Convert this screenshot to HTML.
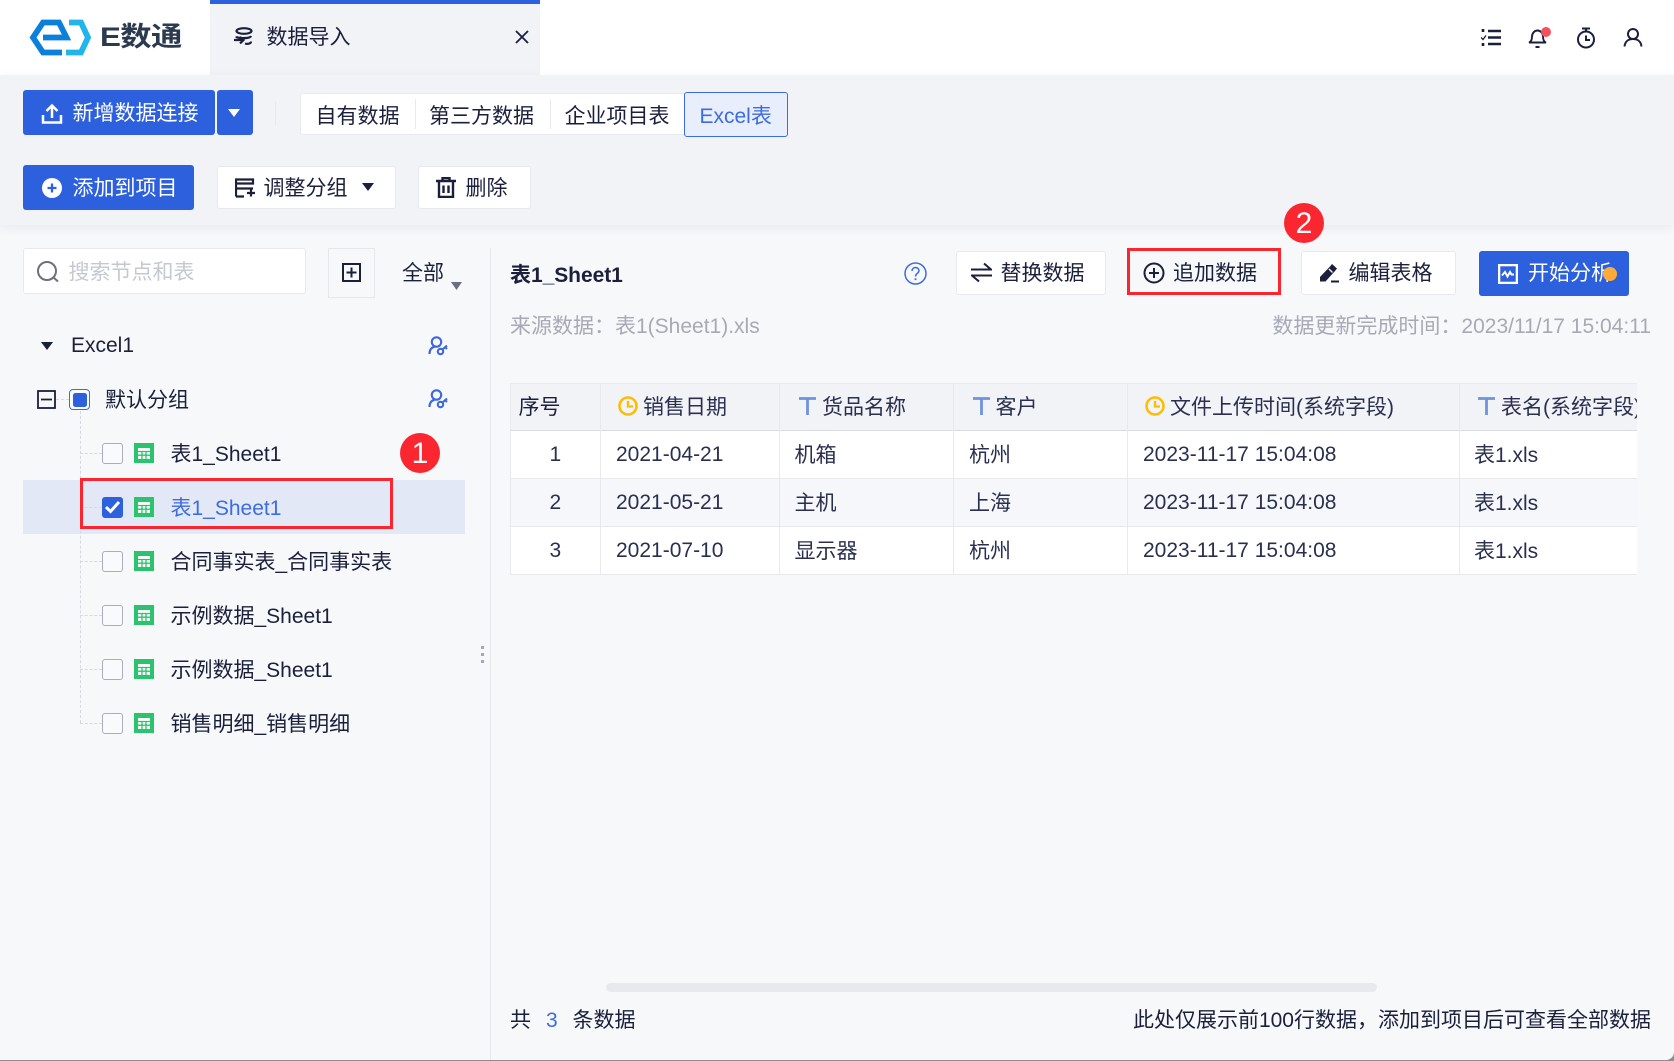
<!DOCTYPE html>
<html lang="zh-CN">
<head>
<meta charset="utf-8">
<title>数据导入</title>
<style>
html,body{margin:0;padding:0;width:1674px;height:1061px;overflow:hidden;background:#8a8f92}
#p{position:absolute;left:0;top:0;width:1674px;height:1060px;background:#f7f8fa;overflow:hidden;border-bottom-right-radius:8px;font-family:"Liberation Sans","Noto Sans CJK SC",sans-serif;font-size:21px;color:#1b1f3b}
#p div,#p svg{position:absolute}
.t{height:30px;line-height:30px;white-space:nowrap;margin-top:2px}
.w{background:#fff;border:1px solid #e8e9ee;border-radius:3px;box-sizing:border-box}
.b{background:#2d60dc;border-radius:3px}
.cb{width:21px;height:21px;box-sizing:border-box;border:1.5px solid #a9adbc;border-radius:3px;left:102px;background:#f9fafc}
.g{color:#a7aab6}
.c{color:#2a2f50}
.ln{background:#e7e9ee}
.dh{border-top:1px dashed #d6d8df;height:0}
</style>
</head>
<body>
<div id="p">
<svg width="0" height="0" style="left:0;top:0">
<symbol id="tb" viewBox="0 0 20 20"><rect width="20" height="20" fill="#2bc46e"/><rect x="4" y="5" width="12" height="11" fill="#fff"/><path d="M4 8.500h12M4 12.200h12M8 8.500v7.500M12 8.500v7.500" stroke="#2bc46e" stroke-width="1.300" fill="none"/></symbol>
<symbol id="pk" viewBox="0 0 20 20"><g fill="none" stroke="#3f67dc" stroke-width="2.100"><circle cx="8.500" cy="6" r="4.700"/><path d="M1.500 18c0-4 2-6.500 5-7.200"/><circle cx="12.500" cy="15.500" r="2.700"/><path d="M14.500 13.500l4.500-4M17 11l2 2"/></g></symbol>
<symbol id="ck" viewBox="0 0 20 20"><circle cx="10" cy="10" r="8.500" fill="none" stroke="#fdbd00" stroke-width="2.600"/><path d="M10 5v5.500h5" fill="none" stroke="#fdbd00" stroke-width="2.300"/></symbol>
<symbol id="tt" viewBox="0 0 18 18"><path d="M0 1.500h17M8.500 1.500V18" fill="none" stroke="#6f93dc" stroke-width="2.800"/></symbol>
</svg>

<!-- header -->
<div style="left:0;top:0;width:1674px;height:75px;background:#fff"></div>
<svg style="left:28px;top:18px" width="64" height="40" viewBox="28 18 64 40" fill="none" stroke-width="5.800">
<path d="M62 52.500H43L33 37.500 43 22.500H59L66.500 37.500H43" stroke="#0a80da"/>
<path d="M69 22.500H81L88 37.500 81 52.500H66" stroke="#22b5ea"/>
</svg>
<div class="t" style="left:100px;top:20px;font-size:27px;font-weight:700;color:#2b3a4e;letter-spacing:-.5px;transform:scaleX(1.16);transform-origin:0 50%">E数通</div>

<div style="left:210px;top:0;width:330px;height:75px;background:#f2f3f7"></div>
<div style="left:210px;top:0;width:330px;height:4px;background:#2d60dc"></div>
<svg style="left:232px;top:27px" width="22" height="20" viewBox="0 0 22 20" fill="none" stroke="#1b1f3b" stroke-width="2.200"><ellipse cx="12" cy="4" rx="7.500" ry="2.800"/><path d="M4 9.500c1 2 14 2.500 15-.5M13 16.500c3 1 6 0 6-2M2 13h9M8 10l3.500 3L8 16.500"/></svg>
<div class="t" style="left:266.500px;top:21px">数据导入</div>
<svg style="left:515px;top:30px" width="14" height="14" viewBox="0 0 14 14" stroke="#1b1f3b" stroke-width="1.800"><path d="M1 1l12 12M13 1L1 13"/></svg>

<svg style="left:1481px;top:28px" width="20" height="19" viewBox="0 0 20 19" fill="none" stroke="#1b1f3b"><path d="M7 3h13M7 9.500h13M7 16h13" stroke-width="2.600"/><path d="M2 1v3M2 15v3" stroke-width="2.600"/><path d="M0 9.500l2 2 3-4" stroke-width="1.300"/></svg>
<svg style="left:1528px;top:27px" width="20" height="21" viewBox="0 0 20 21" fill="none" stroke="#1b1f3b" stroke-width="1.900"><path d="M1 15.500c2.500-1 2.800-3 3-6 .2-3.500 2.500-6 5.500-6s5.300 2.500 5.500 6c.2 3 .5 5 3 6zM7.500 20h4"/></svg>
<svg style="left:1541px;top:27px" width="10" height="10"><circle cx="5" cy="5" r="5" fill="#f3525c"/></svg>
<svg style="left:1576px;top:27px" width="20" height="22" viewBox="0 0 20 22" fill="none" stroke="#1b1f3b" stroke-width="2"><circle cx="10" cy="12.500" r="8"/><path d="M6 1.500h8M10 1.500v3M10 8.500v4.500h4"/></svg>
<svg style="left:1623px;top:28px" width="20" height="19" viewBox="0 0 20 19" fill="none" stroke="#1b1f3b" stroke-width="2"><circle cx="10" cy="6" r="5"/><path d="M1.500 18.500c.5-5 4-7.500 8.500-7.500s8 2.500 8.500 7.500"/></svg>

<!-- toolbar -->
<div style="left:0;top:75px;width:1674px;height:150px;background:#f2f3f7;box-shadow:0 3px 10px rgba(40,50,80,.07)"></div>
<div class="b" style="left:23px;top:90px;width:192px;height:45px"></div>
<svg style="left:41px;top:103px" width="22" height="21" viewBox="0 0 22 21" fill="none" stroke="#fff" stroke-width="2.500"><path d="M11 15V2.500M5.500 8L11 2.500 16.500 8M2 12v7.500h18V12"/></svg>
<div class="t" style="left:72.500px;top:97px;color:#fff">新增数据连接</div>
<div class="b" style="left:217px;top:90px;width:36px;height:45px"></div>
<svg style="left:228px;top:109px" width="12" height="8"><path d="M0 0h12L6 8z" fill="#fff"/></svg>
<div class="ln" style="left:275px;top:101px;width:1px;height:24px"></div>

<div class="w" style="left:300px;top:93px;width:388px;height:42px"></div>
<div class="ln" style="left:415px;top:99px;width:1px;height:30px"></div>
<div class="ln" style="left:550px;top:99px;width:1px;height:30px"></div>
<div class="t" style="left:315.500px;top:100px">自有数据</div>
<div class="t" style="left:429px;top:100px">第三方数据</div>
<div class="t" style="left:564.500px;top:100px">企业项目表</div>
<div style="left:684px;top:92px;width:104px;height:45px;background:#e8eefb;border:1px solid #3d6ce0;border-radius:3px;box-sizing:border-box"></div>
<div class="t" style="left:699.500px;top:100px;color:#3d6ce0">Excel表</div>

<div class="b" style="left:23px;top:165px;width:171px;height:45px"></div>
<svg style="left:42px;top:178px" width="20" height="20" viewBox="0 0 20 20"><circle cx="10" cy="10" r="10" fill="#fff"/><path d="M5.500 10h9M10 5.500v9" stroke="#2d60dc" stroke-width="2.300"/></svg>
<div class="t" style="left:72.500px;top:172px;color:#fff">添加到项目</div>

<div class="w" style="left:217px;top:166px;width:179px;height:43px"></div>
<svg style="left:235px;top:178px" width="20" height="20" viewBox="0 0 20 20" fill="none" stroke="#1b1f3b" stroke-width="2.200"><path d="M1 1.500h17v4H1zM1 5.500V18.500M1 10.500h17M1 18.500h8M12 15h8M16 11.500v7"/></svg>
<div class="t" style="left:263.500px;top:172px">调整分组</div>
<svg style="left:362px;top:183px" width="12" height="8"><path d="M0 0h12L6 8z" fill="#1b1f3b"/></svg>

<div class="w" style="left:418px;top:166px;width:113px;height:43px"></div>
<svg style="left:436px;top:177px" width="20" height="21" viewBox="0 0 20 21" fill="none" stroke="#1b1f3b" stroke-width="2.400"><path d="M0 4h20M6.500 4V1h7v3M3 4v16h14V4M7.500 8.500v7.500M12.500 8.500v7.500"/></svg>
<div class="t" style="left:465.500px;top:172px">删除</div>

<!-- sidebar -->
<div style="left:490px;top:248px;width:1px;height:812px;background:#e8e9ee"></div>
<div class="w" style="left:23px;top:248px;width:283px;height:46px"></div>
<svg style="left:36px;top:260px" width="24" height="24" viewBox="0 0 24 24" fill="none" stroke="#6c6f80" stroke-width="2"><circle cx="11" cy="11" r="9"/><path d="M17.500 17.500l4.500 4"/></svg>
<div class="t" style="left:68.500px;top:256px;color:#c6c8d1">搜索节点和表</div>
<div style="left:328px;top:248px;width:47px;height:50px;border:1px solid #e5e7ec;box-sizing:border-box"></div>
<svg style="left:342px;top:263px" width="19" height="19" viewBox="0 0 19 19" fill="none" stroke="#1b1f3b" stroke-width="2"><rect x="1" y="1" width="17" height="17"/><path d="M4.500 9.500h10M9.500 4.500v10"/></svg>
<div class="t" style="left:402px;top:257px">全部</div>
<svg style="left:451px;top:282px" width="11" height="8"><path d="M0 0h11L5.500 8z" fill="#6b6f85"/></svg>

<svg style="left:41px;top:342px" width="12" height="8"><path d="M0 0h12L6 8z" fill="#1b1f3b"/></svg>
<div class="t" style="left:71px;top:329px">Excel1</div>
<svg style="left:428px;top:336px" width="20" height="20"><use href="#pk"/></svg>

<div class="dh" style="left:56px;top:399px;width:13px"></div>
<svg style="left:37px;top:390px" width="19" height="19" viewBox="0 0 19 19" fill="none" stroke="#1b1f3b" stroke-width="1.800"><rect x="1" y="1" width="17" height="17"/><path d="M4 9.500h11"/></svg>
<div style="left:69px;top:389px;width:21px;height:21px;box-sizing:border-box;border:1.500px solid #3d6ce0;border-radius:4px;background:#f9fafc"></div>
<div style="left:73px;top:393px;width:14px;height:14px;background:#2d60dc;border-radius:2.500px"></div>
<div class="t" style="left:105px;top:384px">默认分组</div>
<svg style="left:428px;top:389px" width="20" height="20"><use href="#pk"/></svg>

<div style="left:23px;top:480px;width:442px;height:54px;background:#e2e8f6"></div>
<div style="left:80px;top:411px;width:0;height:312px;border-left:1px dashed #d6d8df"></div>
<div class="dh" style="left:80px;top:453px;width:22px"></div>
<div class="dh" style="left:84px;top:507px;width:18px"></div>
<div class="dh" style="left:80px;top:561px;width:22px"></div>
<div class="dh" style="left:80px;top:615px;width:22px"></div>
<div class="dh" style="left:80px;top:669px;width:22px"></div>
<div class="dh" style="left:80px;top:723px;width:22px"></div>

<div class="cb" style="top:443px"></div>
<svg style="left:134px;top:443px" width="20" height="20"><use href="#tb"/></svg>
<div class="t" style="left:170.500px;top:438px">表1_Sheet1</div>

<div class="cb" style="top:497px;background:#2d60dc;border-color:#2d60dc"></div>
<svg style="left:105px;top:500px" width="15" height="14" viewBox="0 0 15 14" fill="none" stroke="#fff" stroke-width="3"><path d="M1 7l4.500 4.500L14 2"/></svg>
<svg style="left:134px;top:497px" width="20" height="20"><use href="#tb"/></svg>
<div class="t" style="left:170.500px;top:492px;color:#3d6ce0">表1_Sheet1</div>

<div class="cb" style="top:551px"></div>
<svg style="left:134px;top:551px" width="20" height="20"><use href="#tb"/></svg>
<div class="t" style="left:170.500px;top:546px">合同事实表_合同事实表</div>

<div class="cb" style="top:605px"></div>
<svg style="left:134px;top:605px" width="20" height="20"><use href="#tb"/></svg>
<div class="t" style="left:170.500px;top:600px">示例数据_Sheet1</div>

<div class="cb" style="top:659px"></div>
<svg style="left:134px;top:659px" width="20" height="20"><use href="#tb"/></svg>
<div class="t" style="left:170.500px;top:654px">示例数据_Sheet1</div>

<div class="cb" style="top:713px"></div>
<svg style="left:134px;top:713px" width="20" height="20"><use href="#tb"/></svg>
<div class="t" style="left:170.500px;top:708px">销售明细_销售明细</div>

<div style="left:481px;top:646px;width:3px;height:3px;background:#a9a3c2"></div>
<div style="left:481px;top:653px;width:3px;height:3px;background:#a9a3c2"></div>
<div style="left:481px;top:660px;width:3px;height:3px;background:#a9a3c2"></div>

<div style="left:80px;top:478px;width:313px;height:51px;border:3px solid #fb2530;box-sizing:border-box"></div>
<div style="left:400px;top:433px;width:40px;height:40px;border-radius:50%;background:#fb2730;color:#fff;font-size:30px;line-height:42px;text-align:center">1</div>

<!-- right head -->
<div class="t" style="left:510px;top:259px;font-weight:700;font-size:21px;letter-spacing:-.05px">表1_Sheet1</div>
<svg style="left:904px;top:262px" width="23" height="23" viewBox="0 0 23 23" fill="none" stroke="#3d6ce0" stroke-width="1.500"><circle cx="11.500" cy="11.500" r="10.500"/><path d="M8 9c0-2 1.500-3.500 3.500-3.500S15 7 15 8.800c0 2.500-3.500 2.700-3.500 5.700"/><path d="M11.500 16.300v1.800" stroke-width="1.800"/></svg>

<div class="w" style="left:956px;top:251px;width:150px;height:44px"></div>
<svg style="left:971px;top:262px" width="21" height="21" viewBox="0 0 21 21" fill="none" stroke="#1b1f3b" stroke-width="2"><path d="M0 7.500h20L13 1.500M21 13.500H1L8 19.500"/></svg>
<div class="t" style="left:1000.500px;top:257px">替换数据</div>

<div style="left:1127px;top:248px;width:154px;height:47px;border:3px solid #fb2530;box-sizing:border-box"></div>
<svg style="left:1143px;top:262px" width="22" height="22" viewBox="0 0 22 22" fill="none" stroke="#1b1f3b" stroke-width="2"><circle cx="11" cy="11" r="9.500"/><path d="M6 11h10M11 6v10"/></svg>
<div class="t" style="left:1173px;top:257px">追加数据</div>

<div class="w" style="left:1301px;top:251px;width:155px;height:44px"></div>
<svg style="left:1319px;top:263px" width="20" height="20" viewBox="0 0 20 20"><path d="M1 14L11 3.500l2-2.500 5 4.500-2 2.500L6.500 18.500H1z" fill="#1b1f3b"/><path d="M12 18.500h8" stroke="#1b1f3b" stroke-width="2"/><path d="M10 6l3.500 3.500" stroke="#fff" stroke-width="1.300"/></svg>
<div class="t" style="left:1348.500px;top:257px">编辑表格</div>

<div class="b" style="left:1479px;top:251px;width:150px;height:45px"></div>
<svg style="left:1498px;top:264px" width="20" height="20" viewBox="0 0 20 20" fill="none" stroke="#fff"><rect x="1" y="1" width="18" height="18" stroke-width="2.600"/><path d="M4 11.500l3-3.500 2.500 4.500L12 8l1.500 2.500H16" stroke-width="2"/></svg>
<div class="t" style="left:1528px;top:257px;color:#fff">开始分析</div>
<svg style="left:1603px;top:267px" width="14" height="14"><circle cx="7" cy="7" r="7" fill="#feab3a"/></svg>

<div style="left:1284px;top:203px;width:40px;height:40px;border-radius:50%;background:#fb2730;color:#fff;font-size:30px;line-height:42px;text-align:center">2</div>

<div class="t g" style="left:510px;top:310px">来源数据：表1(Sheet1).xls</div>
<div class="t g" style="right:23px;top:310px">数据更新完成时间：2023/11/17 15:04:11</div>

<!-- table -->
<div style="left:510px;top:383px;width:1127px;height:47px;background:#f2f3f7"></div>
<div style="left:510px;top:431px;width:1127px;height:47px;background:#fff"></div>
<div style="left:510px;top:479px;width:1127px;height:47px;background:#f6f7fa"></div>
<div style="left:510px;top:527px;width:1127px;height:47px;background:#fff"></div>
<div class="ln" style="left:510px;top:383px;width:1127px;height:1px"></div>
<div style="left:510px;top:430px;width:1127px;height:1px;background:#d8dbe3"></div>
<div class="ln" style="left:510px;top:478px;width:1127px;height:1px"></div>
<div class="ln" style="left:510px;top:526px;width:1127px;height:1px"></div>
<div class="ln" style="left:510px;top:574px;width:1127px;height:1px"></div>
<div class="ln" style="left:510px;top:383px;width:1px;height:192px"></div>
<div class="ln" style="left:600px;top:383px;width:1px;height:192px"></div>
<div class="ln" style="left:779px;top:383px;width:1px;height:192px"></div>
<div class="ln" style="left:953px;top:383px;width:1px;height:192px"></div>
<div class="ln" style="left:1127px;top:383px;width:1px;height:192px"></div>
<div class="ln" style="left:1459px;top:383px;width:1px;height:192px"></div>

<div class="t" style="left:518.500px;top:391px">序号</div>
<svg style="left:618px;top:396px" width="20" height="20"><use href="#ck"/></svg>
<div class="t c" style="left:643px;top:391px">销售日期</div>
<svg style="left:799px;top:397px" width="18" height="18"><use href="#tt"/></svg>
<div class="t c" style="left:822px;top:391px">货品名称</div>
<svg style="left:973px;top:397px" width="18" height="18"><use href="#tt"/></svg>
<div class="t c" style="left:995.500px;top:391px">客户</div>
<svg style="left:1145px;top:396px" width="20" height="20"><use href="#ck"/></svg>
<div class="t c" style="left:1170px;top:391px">文件上传时间(系统字段)</div>
<svg style="left:1478px;top:397px" width="18" height="18"><use href="#tt"/></svg>
<div style="left:1460px;top:383px;width:177px;height:47px;overflow:hidden"><div class="t c" style="left:41px;top:8px">表名(系统字段)</div></div>

<div class="t c" style="left:549.500px;top:438px">1</div>
<div class="t c" style="left:616px;top:438px">2021-04-21</div>
<div class="t c" style="left:794.500px;top:439px">机箱</div>
<div class="t c" style="left:969px;top:439px">杭州</div>
<div class="t c" style="left:1143px;top:438px">2023-11-17 15:04:08</div>
<div class="t c" style="left:1474px;top:439px">表1.xls</div>

<div class="t c" style="left:549.500px;top:486px">2</div>
<div class="t c" style="left:616px;top:486px">2021-05-21</div>
<div class="t c" style="left:794.500px;top:487px">主机</div>
<div class="t c" style="left:969px;top:487px">上海</div>
<div class="t c" style="left:1143px;top:486px">2023-11-17 15:04:08</div>
<div class="t c" style="left:1474px;top:487px">表1.xls</div>

<div class="t c" style="left:549.500px;top:534px">3</div>
<div class="t c" style="left:616px;top:534px">2021-07-10</div>
<div class="t c" style="left:794.500px;top:535px">显示器</div>
<div class="t c" style="left:969px;top:535px">杭州</div>
<div class="t c" style="left:1143px;top:534px">2023-11-17 15:04:08</div>
<div class="t c" style="left:1474px;top:535px">表1.xls</div>

<!-- footer -->
<div style="left:606px;top:983px;width:771px;height:9px;background:#e8e9ec;border-radius:4.500px"></div>
<div class="t" style="left:510px;top:1004px">共</div>
<div class="t" style="left:546px;top:1004px;color:#3d6ce0">3</div>
<div class="t" style="left:572.500px;top:1004px">条数据</div>
<div class="t" style="right:23px;top:1004px">此处仅展示前100行数据，添加到项目后可查看全部数据</div>
</div>
</body>
</html>
